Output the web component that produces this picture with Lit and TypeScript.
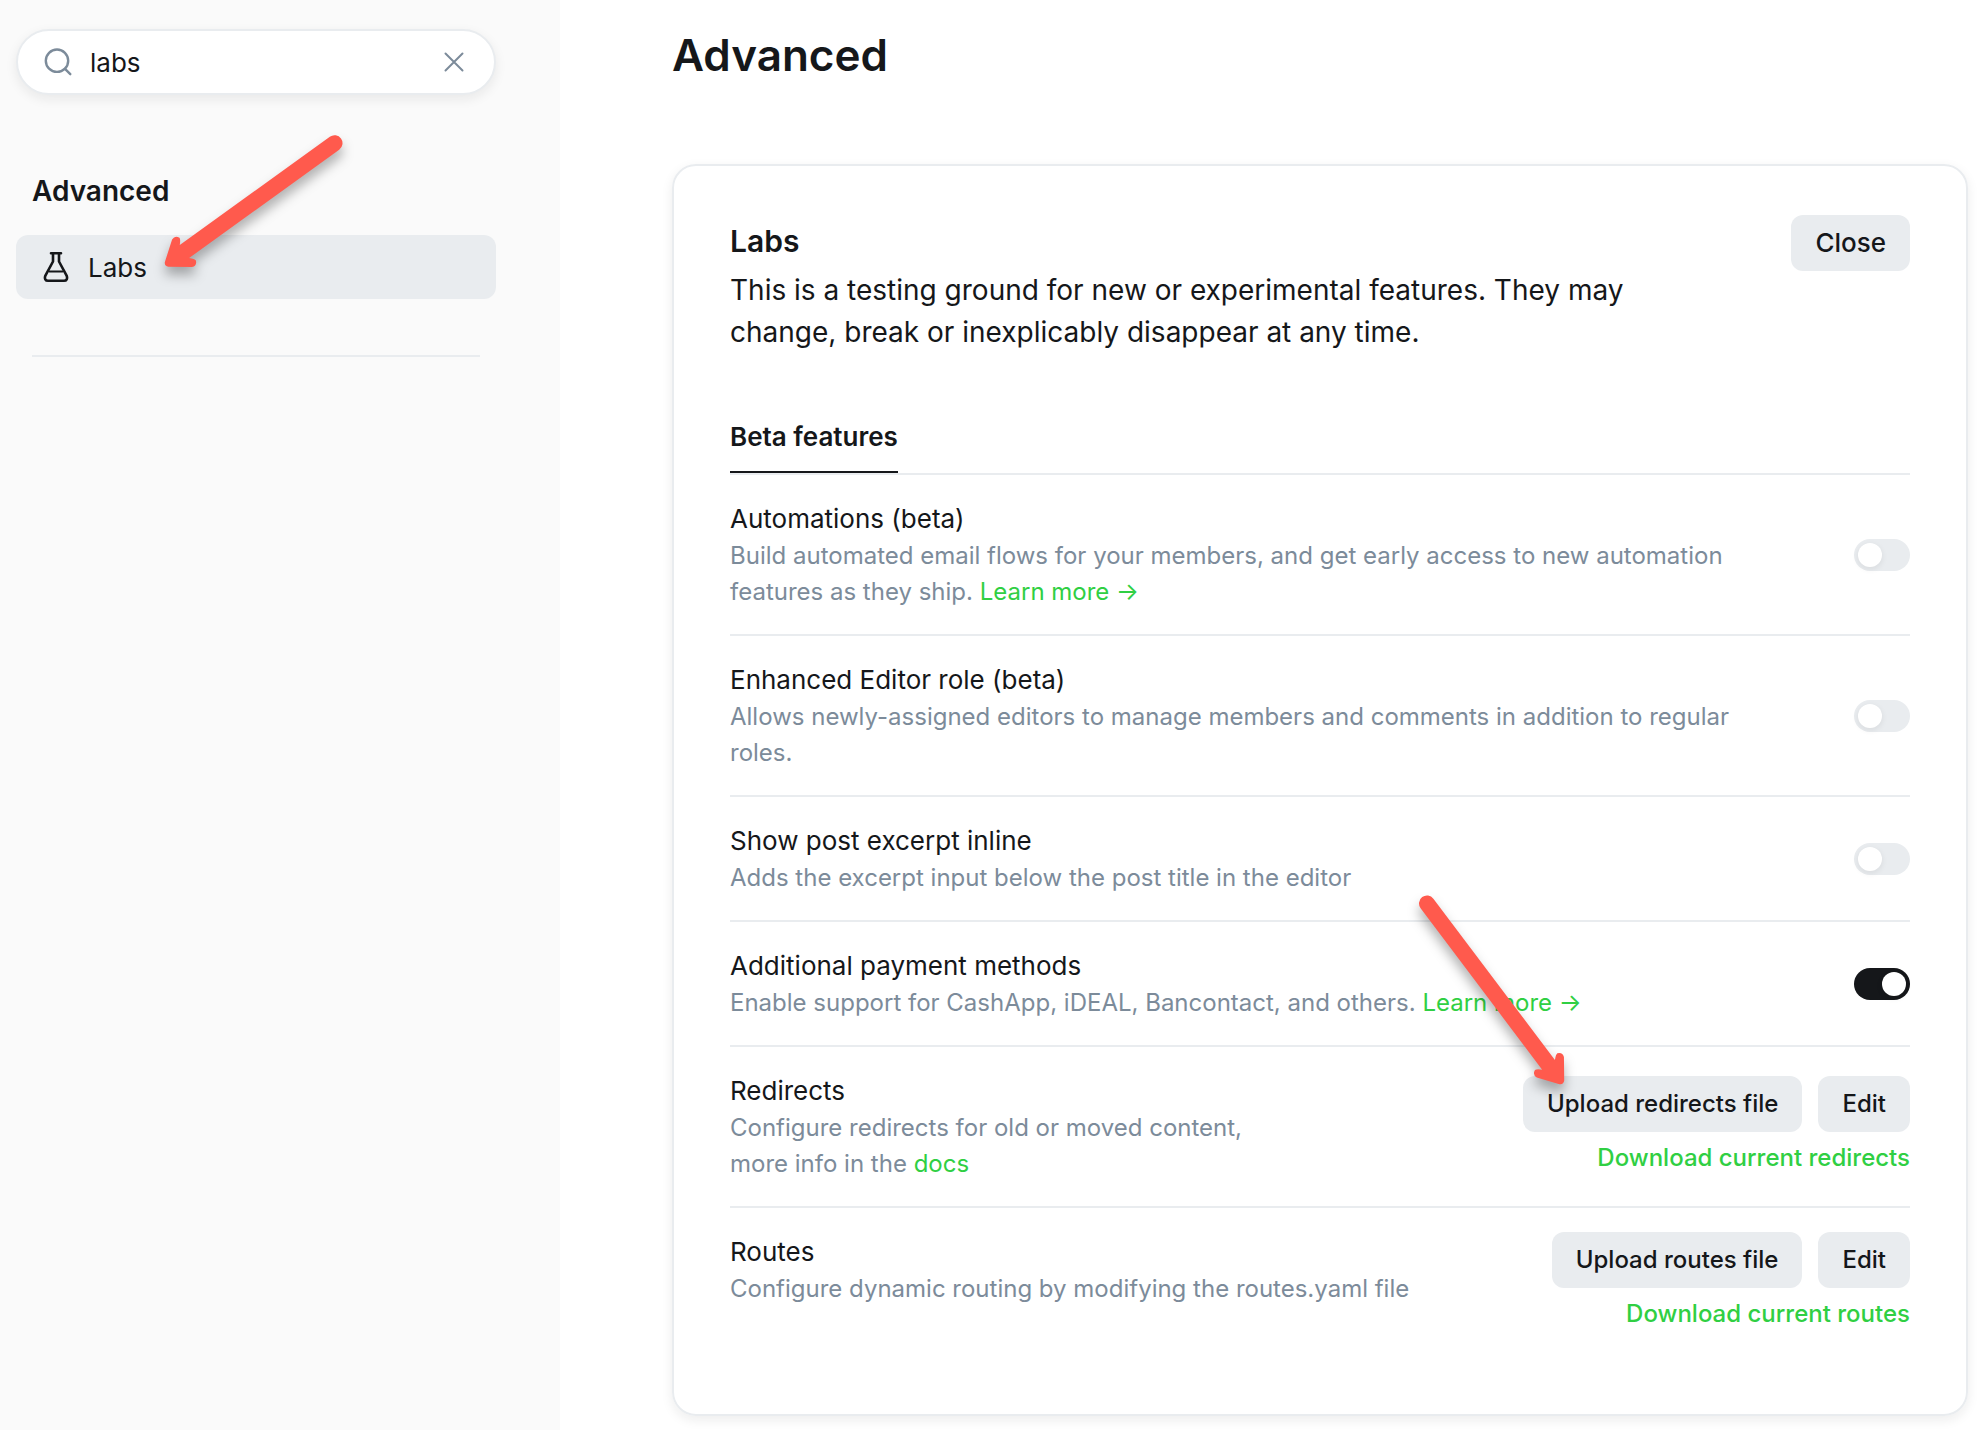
import { LitElement, html, css, svg, nothing } from "lit";
import type { TemplateResult } from "lit";
import { customElement, property } from "lit/decorators.js";

@customElement("toggle-switch")
class ToggleSwitch extends LitElement {
  @property({ type: Boolean }) checked = false;
  @property() label = "";

  static styles = css`
    :host {
      display: block;
      flex: none;
    }
    .switch {
      appearance: none;
      display: flex;
      align-items: center;
      width: 56px;
      height: 32px;
      margin: 0;
      padding: 0 4px;
      box-sizing: border-box;
      border-radius: 16px;
      background: #e9ecef;
      cursor: pointer;
    }
    .switch::before {
      content: "";
      width: 24px;
      height: 24px;
      border-radius: 50%;
      background: #fff;
      box-shadow: 0 2px 6px rgba(21, 23, 26, 0.08);
    }
    .switch:checked {
      background: #15171a;
      justify-content: flex-end;
    }
  `;

  render() {
    return html`<input class="switch" type="checkbox" role="switch" aria-label=${this.label} .checked=${this.checked} />`;
  }
}

interface Feature {
  title: string;
  text: TemplateResult;
  on?: boolean;
  upload?: string;
  download?: string;
}

const features: Feature[] = [
  {
    title: "Automations (beta)",
    text: html`Build automated email flows for your members, and get early access to new automation features as they ship.
      <a class="link" href="#automations">Learn more →</a>`,
  },
  {
    title: "Enhanced Editor role (beta)",
    text: html`Allows newly-assigned editors to manage members and comments in addition to regular roles.`,
  },
  {
    title: "Show post excerpt inline",
    text: html`Adds the excerpt input below the post title in the editor`,
  },
  {
    title: "Additional payment methods",
    text: html`Enable support for CashApp, iDEAL, Bancontact, and others.
      <a class="link" href="#payments">Learn more →</a>`,
    on: true,
  },
  {
    title: "Redirects",
    text: html`Configure redirects for old or moved content,<br />more info in the <a class="link" href="#docs">docs</a>`,
    upload: "Upload redirects file",
    download: "Download current redirects",
  },
  {
    title: "Routes",
    text: html`Configure dynamic routing by modifying the routes.yaml file`,
    upload: "Upload routes file",
    download: "Download current routes",
  },
];

/* Rounded arrow that points at (0, 0) from the right along the x axis. */
const arrowShape = (length: number) => svg`
  <path
    d="M2 -3 L21 -17 Q26 -19 28 -14 Q28 -12 24 -8 L${length - 8} -8 A8 8 0 0 1 ${length - 8} 8 L24 8 Q28 12 28 14 Q26 19 21 17 L2 3 Q-1 0 2 -3 Z"
    fill="#ff5a4d"
  />`;

@customElement("app-root")
class AppRoot extends LitElement {
  static styles = css`
    :host {
      display: block;
      font-family: Inter, "Liberation Sans", sans-serif;
      color: #15171a;
      background: #fff;
    }
    .page {
      position: relative;
      display: flex;
      min-height: 100vh;
      overflow: hidden;
    }
    .sidebar {
      flex: none;
      width: 560px;
      box-sizing: border-box;
      padding: 29px 64px 0 16px;
      background: #fafafa;
    }
    .search {
      display: flex;
      align-items: center;
      gap: 18px;
      height: 66px;
      box-sizing: border-box;
      padding: 0 26px;
      border: 2px solid #e9ecef;
      border-radius: 33px;
      background: #fff;
      box-shadow: 0 4px 12px rgba(21, 23, 26, 0.08);
    }
    .search-input {
      flex: 1;
      min-width: 0;
      padding: 2px 0 0;
      border: 0;
      outline: 0;
      background: none;
      font: 400 26px/36px Inter, sans-serif;
      color: inherit;
    }
    .clear {
      display: flex;
      padding: 4px;
      border: 0;
      background: none;
      cursor: pointer;
    }
    .icon {
      display: block;
      flex: none;
    }
    .group-title {
      margin: 78px 16px 0;
      font-size: 28px;
      line-height: 36px;
      font-weight: 600;
    }
    .nav-item {
      display: flex;
      align-items: center;
      gap: 18px;
      height: 64px;
      margin-top: 26px;
      padding: 0 26px;
      border-radius: 12px;
      background: #e9ecef;
      color: inherit;
      text-decoration: none;
      font-size: 26px;
      line-height: 36px;
    }
    .nav-label {
      padding-top: 2px;
    }
    .rule {
      height: 2px;
      margin: 56px 16px 0;
      border: 0;
      background: #e9ecef;
    }
    .main {
      flex: 1;
      min-width: 0;
      padding: 27px 20px 14px 112px;
    }
    .page-title {
      margin: 0 0 81px;
      font-size: 44px;
      line-height: 56px;
      font-weight: 600;
    }
    .card {
      padding: 49px 56px 57px;
      border: 2px solid #e9ecef;
      border-radius: 24px;
      box-shadow: 0 4px 12px rgba(21, 23, 26, 0.08);
    }
    .card-head {
      display: flex;
      align-items: flex-start;
      justify-content: space-between;
      gap: 24px;
    }
    .card-title {
      margin: 5px 0 7px;
      font-size: 30px;
      line-height: 42px;
      font-weight: 600;
    }
    .card-text {
      max-width: 944px;
      margin: 0;
      font-size: 28px;
      line-height: 42px;
    }
    .button {
      flex: none;
      height: 56px;
      padding: 0 24px;
      border: 0;
      border-radius: 12px;
      background: #e9ecef;
      color: #15171a;
      font: 500 24px/36px Inter, sans-serif;
      cursor: pointer;
    }
    .button-close {
      font-size: 26px;
    }
    .tabs {
      display: flex;
      margin-top: 66px;
      border-bottom: 2px solid #e9ecef;
    }
    .tab {
      padding: 0 0 16px;
      border: 0;
      border-bottom: 2px solid #15171a;
      background: none;
      color: inherit;
      font: 600 26px/36px Inter, sans-serif;
      cursor: pointer;
    }
    .row {
      display: flex;
      justify-content: space-between;
      gap: 64px;
      padding: 24px 0;
      border-bottom: 2px solid #e9ecef;
    }
    .row:last-child {
      border-bottom: 0;
    }
    .row-body {
      max-width: 1040px;
    }
    .row-title {
      margin: 0;
      font-size: 26px;
      line-height: 39px;
      font-weight: 400;
    }
    .row-text {
      margin: 0;
      font-size: 24px;
      line-height: 36px;
      color: #7c8b9a;
    }
    .link {
      color: #30cf43;
      text-decoration: none;
    }
    .row-side {
      display: flex;
      flex: none;
      align-items: center;
    }
    .file-actions {
      display: flex;
      flex-direction: column;
      align-items: flex-end;
      gap: 9px;
      padding-bottom: 2px;
    }
    .buttons {
      display: flex;
      gap: 16px;
    }
    .download {
      font-size: 24px;
      line-height: 34px;
      font-weight: 500;
    }
    .annotations {
      position: absolute;
      top: 0;
      left: 0;
      pointer-events: none;
      filter: drop-shadow(0 8px 6px rgba(0, 0, 0, 0.3));
    }
  `;

  private renderSide(f: Feature) {
    if (!f.upload) {
      return html`<toggle-switch label=${f.title} ?checked=${f.on ?? false}></toggle-switch>`;
    }
    return html`
      <div class="file-actions">
        <div class="buttons">
          <button class="button" type="button">${f.upload}</button>
          <button class="button" type="button">Edit</button>
        </div>
        ${f.download ? html`<a class="link download" href="#download">${f.download}</a>` : nothing}
      </div>
    `;
  }

  render() {
    return html`
      <div class="page">
        <aside class="sidebar">
          <div class="search">
            <svg class="icon" width="28" height="28" viewBox="0 0 28 28" fill="none" stroke="#7c8b9a" stroke-width="2.4" stroke-linecap="round" aria-hidden="true">
              <circle cx="13" cy="12.7" r="11.2" />
              <path d="M21 20.8 L26.3 26.2" />
            </svg>
            <input class="search-input" type="text" aria-label="Search settings" .value=${"labs"} />
            <button class="clear" type="button" aria-label="Clear search">
              <svg class="icon" width="20" height="20" viewBox="0 0 20 20" fill="none" stroke="#7c8b9a" stroke-width="2" stroke-linecap="round" aria-hidden="true">
                <path d="M1.5 1.5 L18.5 18.5 M18.5 1.5 L1.5 18.5" />
              </svg>
            </button>
          </div>
          <h2 class="group-title">Advanced</h2>
          <nav>
            <a class="nav-item" href="#labs">
              <svg class="icon" width="28" height="32" viewBox="0 0 28 32" fill="none" stroke="#15171a" stroke-width="2.6" stroke-linecap="round" stroke-linejoin="round" aria-hidden="true">
                <path d="M9 2.2 H19 M11 2.2 V10.5 L3.4 24.6 C2.2 27.6 3.4 29.8 6 29.8 H22 C24.6 29.8 25.8 27.6 24.6 24.6 L17 10.5 V2.2" />
                <path d="M7.5 20.5 H20.5" stroke-width="2" />
              </svg>
              <span class="nav-label">Labs</span>
            </a>
          </nav>
          <hr class="rule" />
        </aside>
        <main class="main">
          <h1 class="page-title">Advanced</h1>
          <section class="card">
            <header class="card-head">
              <div>
                <h2 class="card-title">Labs</h2>
                <p class="card-text">
                  This is a testing ground for new or experimental features. They may change, break or inexplicably
                  disappear at any time.
                </p>
              </div>
              <button class="button button-close" type="button">Close</button>
            </header>
            <div class="tabs" role="tablist">
              <button class="tab" type="button" role="tab" aria-selected="true">Beta features</button>
            </div>
            ${features.map(
              (f) => html`
                <div class="row">
                  <div class="row-body">
                    <h3 class="row-title">${f.title}</h3>
                    <p class="row-text">${f.text}</p>
                  </div>
                  <div class="row-side">${this.renderSide(f)}</div>
                </div>
              `,
            )}
          </section>
        </main>
        <svg class="annotations" width="1988" height="1430" viewBox="0 0 1988 1430" aria-hidden="true">
          <g transform="translate(165 265.5) rotate(-35.8)">${arrowShape(217)}</g>
          <g transform="translate(1563 1084) rotate(-127)">${arrowShape(234)}</g>
        </svg>
      </div>
    `;
  }
}
